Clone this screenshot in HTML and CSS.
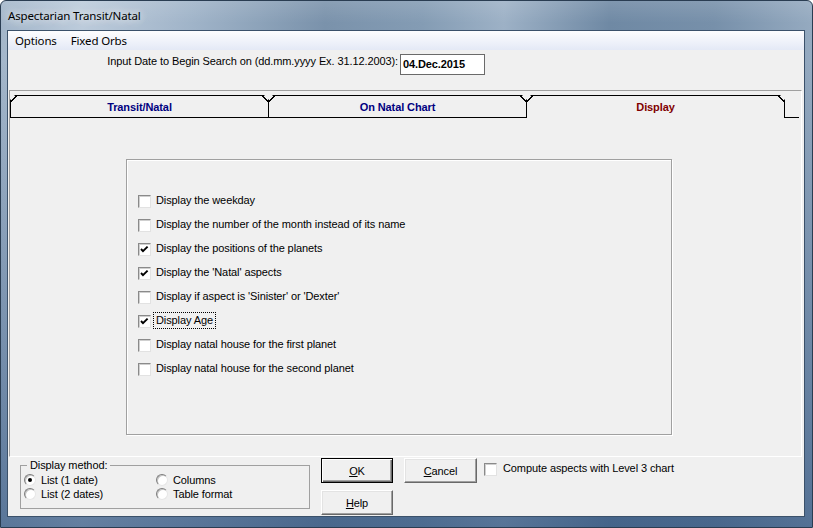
FILE: index.html
```html
<!DOCTYPE html>
<html>
<head>
<meta charset="utf-8">
<title>Aspectarian Transit/Natal</title>
<link rel="stylesheet" href="styles.css">
</head>
<body>
<div class="window">
  <div class="titlebar"><span class="title">Aspectarian Transit/Natal</span></div>
  <div class="client">
    <div class="menubar">
      <span class="menu-item">Options</span>
      <span class="menu-item">Fixed Orbs</span>
    </div>
    <div class="daterow">
      <span class="date-label">Input Date to Begin Search on (dd.mm.yyyy Ex. 31.12.2003):</span>
      <div class="date-input">04.Dec.2015</div>
    </div>
    <div class="tabctl">
      <div class="tabstrip">
        <div class="tab">Transit/Natal</div>
        <div class="tab">On Natal Chart</div>
        <div class="tab active">Display</div>
        <div class="tab-fill"></div>
      </div>
      <div class="panel">
        <div class="optbox">
          <div class="row"><span class="box"></span><span class="lbl">Display the weekday</span></div>
          <div class="row"><span class="box"></span><span class="lbl">Display the number of the month instead of its name</span></div>
          <div class="row"><span class="box checked"><svg viewBox="0 0 11 11" width="11" height="11"><polyline points="2,5 4,7.2 8.6,2.6" fill="none" stroke="#000" stroke-width="1.9"/></svg></span><span class="lbl">Display the positions of the planets</span></div>
          <div class="row"><span class="box checked"><svg viewBox="0 0 11 11" width="11" height="11"><polyline points="2,5 4,7.2 8.6,2.6" fill="none" stroke="#000" stroke-width="1.9"/></svg></span><span class="lbl">Display the 'Natal' aspects</span></div>
          <div class="row"><span class="box"></span><span class="lbl">Display if aspect is 'Sinister' or 'Dexter'</span></div>
          <div class="row"><span class="box checked"><svg viewBox="0 0 11 11" width="11" height="11"><polyline points="2,5 4,7.2 8.6,2.6" fill="none" stroke="#000" stroke-width="1.9"/></svg></span><span class="lbl focus">Display Age</span></div>
          <div class="row"><span class="box"></span><span class="lbl">Display natal house for the first planet</span></div>
          <div class="row"><span class="box"></span><span class="lbl">Display natal house for the second planet</span></div>
        </div>
      </div>
    </div>
    <div class="bottom">
      <fieldset class="method">
        <legend>Display method:</legend>
        <div class="radios">
          <div class="radio-row"><span class="radio on"></span><span class="rlbl">List (1 date)</span></div>
          <div class="radio-row"><span class="radio"></span><span class="rlbl">Columns</span></div>
          <div class="radio-row"><span class="radio"></span><span class="rlbl">List (2 dates)</span></div>
          <div class="radio-row"><span class="radio"></span><span class="rlbl">Table format</span></div>
        </div>
      </fieldset>
      <div class="btncol">
        <button class="btn default"><u>O</u>K</button>
        <button class="btn"><u>H</u>elp</button>
      </div>
      <div class="btncol">
        <button class="btn wide"><u>C</u>ancel</button>
      </div>
      <div class="level3"><span class="box"></span><span class="lbl2">Compute aspects with Level 3 chart</span></div>
    </div>
  </div>
</div>
</body>
</html>
```
FILE: styles.css
```css
* { box-sizing: border-box; }
html, body { margin: 0; padding: 0; }
body {
  width: 813px;
  height: 528px;
  overflow: hidden;
  background: #fff;
  font-family: "Liberation Sans", Arial, sans-serif;
  font-size: 11px;
  letter-spacing: -0.1px;
  color: #000;
}
.window {
  width: 813px;
  height: 528px;
  display: flex;
  flex-direction: column;
  border: 1px solid #2a3d52;
  border-radius: 6px 6px 0 0;
  padding: 0 7px 10px 6px;
  background:
    linear-gradient(180deg, rgba(255,255,255,0.12) 0px, rgba(255,255,255,0) 22px, rgba(40,75,120,0) 60px, rgba(40,75,120,0.6) 100%),
    linear-gradient(90deg, #a3b6ca 0%, #bccbdb 10%, #9fb3c8 24%, #7a92ab 40%, #849cb4 52%, #9db1c6 62%, #6f89a4 75%, #7790aa 88%, #95aac0 100%);
}
.titlebar {
  height: 29px;
  display: flex;
  align-items: center;
  padding-left: 1px;
  font-family: "Noto Sans", "Open Sans", sans-serif;
  font-size: 11.5px;
  letter-spacing: -0.15px;
}
.title {
  text-shadow: 0 0 8px rgba(255,255,255,0.9), 0 0 12px rgba(255,255,255,0.7);
}
.client {
  flex: 1;
  display: flex;
  flex-direction: column;
  border: 1px solid #3b516a;
  background: #f0f0f0;
}
.menubar {
  height: 19px;
  display: flex;
  align-items: center;
  background: linear-gradient(#fdfdfe, #e4e9f6);
  font-family: "Noto Sans", "Open Sans", sans-serif;
  font-size: 11.5px;
  letter-spacing: -0.15px;
}
.menu-item { padding: 0 7px; }
.daterow {
  height: 40px;
  display: flex;
  align-items: flex-start;
  padding-top: 4px;
}
.date-label {
  width: 390px;
  margin: 1px 2px 0 0;
  text-align: right;
  line-height: 13px;
  white-space: nowrap;
}
.date-input {
  width: 85px;
  height: 21px;
  border: 1px solid #6a6a6a;
  background: #fff;
  font-weight: bold;
  padding-left: 2px;
  line-height: 19px;
}
.tabctl {
  width: 793px;
  height: 367px;
  margin-left: 1px;
  display: flex;
  flex-direction: column;
  border-top: 1px solid #a0a0a0;
  border-left: 1px solid #a0a0a0;
  border-right: 1px solid #fff;
  border-bottom: 1px solid #fff;
}
.tabstrip {
  display: flex;
  height: 23px;
  margin-top: 4px;
}
.tab {
  width: 259px;
  height: 23px;
  border: 1px solid #000;
  display: flex;
  align-items: center;
  justify-content: center;
  font-weight: bold;
  color: #000080;
  clip-path: polygon(5px 0, calc(100% - 5px) 0, 100% 5px, 100% 100%, 0 100%, 0 5px);
  background:
    linear-gradient(135deg, transparent 3.3px, #000 3.3px, #000 4.5px, transparent 4.5px),
    linear-gradient(225deg, transparent 3.3px, #000 3.3px, #000 4.5px, transparent 4.5px),
    #f0f0f0;
}
.tab + .tab { margin-left: -1px; }
.tab.active {
  border-bottom: none;
  color: #800000;
}
.tab-fill {
  width: 14px;
  border-bottom: 1px solid #000;
}
.panel {
  flex: 1;
  padding: 41px 0 0 116px;
}
.optbox {
  width: 546px;
  height: 276px;
  border: 1px solid #a0a0a0;
  box-shadow: 1px 1px 0 #fff, inset 1px 1px 0 #fff;
  padding: 35px 0 0 11px;
  display: flex;
  flex-direction: column;
  gap: 11px;
}
.row {
  display: flex;
  align-items: center;
  height: 13px;
}
.box {
  width: 13px;
  height: 13px;
  flex: none;
  display: flex;
  align-items: center;
  justify-content: center;
  border: 1px solid;
  border-color: #8a8a8a #e2e2e2 #e2e2e2 #8a8a8a;
  background: #fff;
  box-shadow: inset 1px 1px 0 #cfcfcf;
}
.box svg { display: block; }
.lbl {
  margin-left: 5px;
  line-height: 13px;
  padding-bottom: 2px;
  white-space: nowrap;
}
.lbl.focus {
  margin-left: 3px;
  padding: 1px 2px;
  align-self: flex-start;
  margin-top: -2px;
  outline: 1px dotted #000;
}
.bottom {
  height: 59px;
  display: flex;
  align-items: flex-start;
  padding-left: 12px;
}
.method {
  width: 290px;
  min-width: 0;
  margin: 2px 0 0 0;
  padding: 1px 0 7px 3px;
  border: 1px solid #a0a0a0;
}
.method legend {
  margin-left: 3px;
  padding: 0 3px;
  line-height: 13px;
}
.radios {
  display: grid;
  grid-template-columns: 132px auto;
  grid-auto-rows: 14px;
}
.radio-row {
  display: flex;
  align-items: center;
}
.radio {
  width: 12px;
  height: 12px;
  flex: none;
  border-radius: 50%;
  border: 1px solid;
  border-color: #7d7d7d #e6e6e6 #e6e6e6 #7d7d7d;
  background: #fff;
  box-shadow: inset 1px 1px 0 #c4c4c4;
  display: flex;
  align-items: center;
  justify-content: center;
}
.radio.on::after {
  content: "";
  width: 4px;
  height: 4px;
  border-radius: 50%;
  background: #000;
}
.rlbl {
  margin-left: 5px;
  white-space: nowrap;
  line-height: 13px;
}
.btncol {
  display: flex;
  flex-direction: column;
  gap: 7px;
  margin: 1px 0 0 11px;
}
.btn {
  width: 72px;
  height: 25px;
  padding: 0;
  font-family: "Liberation Sans", Arial, sans-serif;
  font-size: 11px;
  letter-spacing: -0.1px;
  color: #000;
  background: #f0f0f0;
  border: 1px solid;
  border-color: #fff #696969 #696969 #fff;
  box-shadow: inset -1px -1px 0 #a0a0a0, inset 1px 1px 0 #e3e3e3;
}
.btn.wide { width: 73px; }
.btn.default {
  border-color: #000;
  box-shadow: inset 1px 1px 0 #fff, inset -1px -1px 0 #696969, inset -2px -2px 0 #a0a0a0;
}
.level3 {
  display: flex;
  align-items: center;
  margin: 5px 0 0 7px;
}
.lbl2 {
  margin-left: 6px;
  white-space: nowrap;
  line-height: 13px;
  padding-bottom: 1px;
}
```
